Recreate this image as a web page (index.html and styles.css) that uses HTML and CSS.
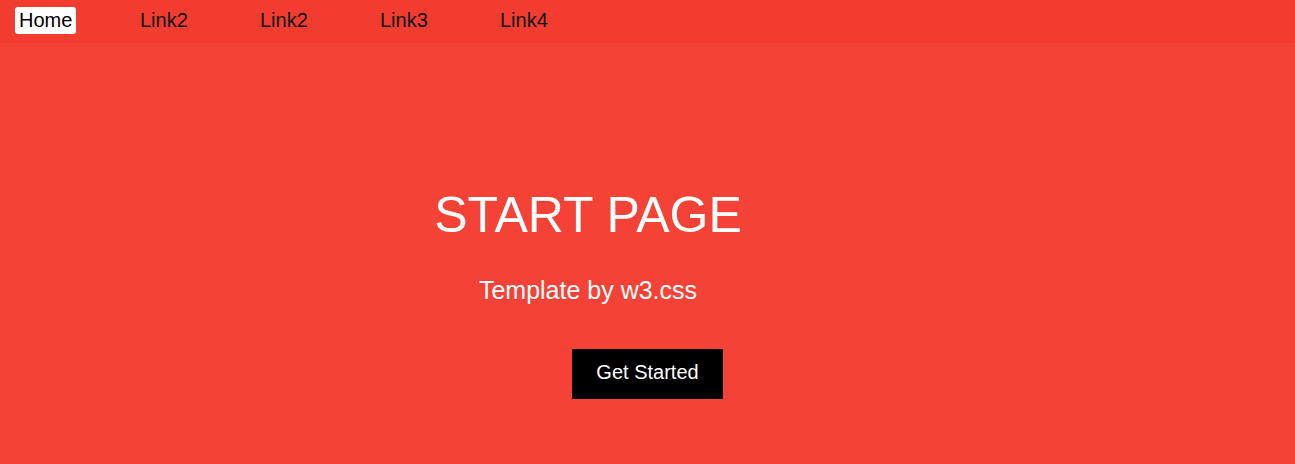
FILE: index.html
```html
<!DOCTYPE html>
<html lang="en">
<head>
<meta charset="utf-8">
<title>Start Page</title>
<link rel="stylesheet" href="styles.css">
</head>
<body>
<nav class="topnav">
  <ul class="nav-list">
    <li class="nav-item"><a class="nav-link nav-link-active" href="#">Home</a></li>
    <li class="nav-item"><a class="nav-link" href="#">Link2</a></li>
    <li class="nav-item"><a class="nav-link" href="#">Link2</a></li>
    <li class="nav-item"><a class="nav-link" href="#">Link3</a></li>
    <li class="nav-item"><a class="nav-link" href="#">Link4</a></li>
  </ul>
</nav>
<header class="hero">
  <div class="hero-text">
    <h1 class="hero-title">START PAGE</h1>
    <p class="hero-sub">Template by w3.css</p>
  </div>
  <a class="hero-button" href="#">Get Started</a>
</header>
</body>
</html>
```
FILE: styles.css
```css
html, body {
  margin: 0;
  padding: 0;
  height: 100%;
}
body {
  font-family: "Liberation Sans", Arial, sans-serif;
  background: #f44336;
  color: #000;
  display: flex;
  flex-direction: column;
}
.topnav {
  background: #f23c30;
  height: 43px;
  padding-left: 15px;
}
.nav-list {
  list-style: none;
  margin: 0;
  padding: 0;
  display: flex;
}
.nav-item {
  width: 120px;
  box-sizing: border-box;
  padding-top: 7px;
}
.nav-item + .nav-item {
  padding-left: 5px;
}
.nav-link {
  display: inline-block;
  font-size: 20px;
  line-height: 27px;
  color: #111;
  text-decoration: none;
}
.nav-link-active {
  background: #fff;
  color: #000;
  padding: 0 4px;
  border-radius: 3px;
}
.hero {
  flex: 1;
  background: #f44336;
  color: #fff;
  text-align: center;
  padding-top: 144px;
}
.hero-text {
  padding-right: 119px;
}
.hero-title {
  font-size: 50px;
  line-height: 56px;
  font-weight: normal;
  margin: 0;
}
.hero-sub {
  font-size: 25px;
  line-height: 28px;
  margin: 33px 0 0;
}
.hero-button {
  display: inline-block;
  margin-top: 45px;
  background: #000;
  color: #fff;
  font-size: 20px;
  line-height: 25px;
  padding: 11px 24px 14px;
  text-decoration: none;
}
```
